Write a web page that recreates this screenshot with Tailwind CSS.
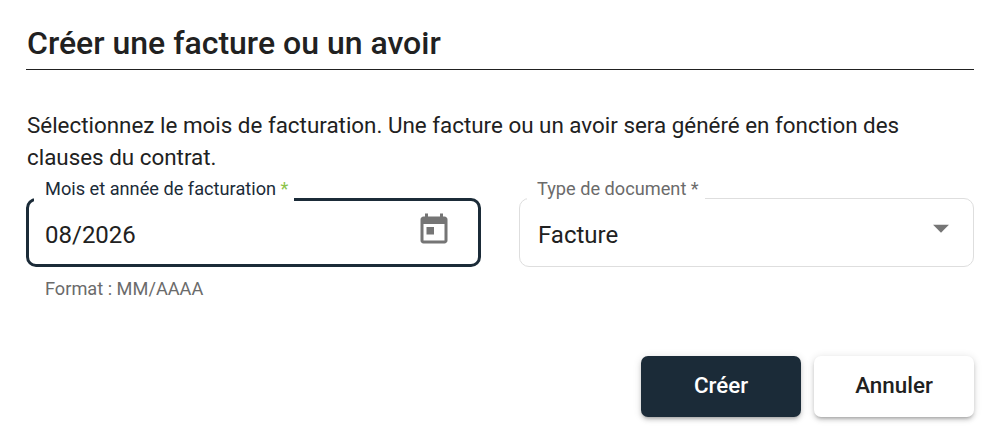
<!DOCTYPE html>
<html lang="fr">
<head>
  <meta charset="UTF-8" />
  <title>Créer une facture ou un avoir</title>
  <script src="https://cdn.jsdelivr.net/npm/@tailwindcss/browser@4"></script>
</head>
<body class="bg-white font-['Roboto',sans-serif] text-[#212121] overflow-hidden">
  <div class="w-[1002px] h-[442px] pl-[26px] pr-[28px] overflow-hidden">
    <!-- Title -->
    <h1 class="h-[70px] pt-[23px] pl-px border-b border-[#212121] text-[32px] leading-[40px] font-medium">Créer une facture ou un avoir</h1>

    <p class="mt-[39px] pl-px text-[22.4px] leading-[32px]">Sélectionnez le mois de facturation. Une facture ou un avoir sera généré en fonction des clauses du contrat.</p>

    <!-- Fields -->
    <div class="mt-[25px] flex gap-[38px]">
      <div class="w-[455px]">
        <div class="relative h-[69px] rounded-[10px] border-[3px] border-[#1b2b38] flex items-center justify-between pl-[16px] pr-[26px]">
          <span class="absolute left-[5px] -top-[24px] h-[26px] bg-white pl-[11px] pr-[6px] text-[18.2px] leading-[24px] text-[#1b2b38] whitespace-nowrap">Mois et année de facturation <span class="text-[#8bc34a]">*</span></span>
          <span class="text-[24px] pt-[5px]">08/2026</span>
          <svg class="w-[36px] h-[36px] -mt-[5px] fill-[#757575]" viewBox="0 0 24 24"><path d="M19 3h-1V1h-2v2H8V1H6v2H5c-1.11 0-1.99.9-1.99 2L3 19c0 1.1.89 2 2 2h14c1.1 0 2-.9 2-2V5c0-1.1-.9-2-2-2zm0 16H5V8h14v11zM7 10h5v5H7z"/></svg>
        </div>
        <p class="mt-[10px] pl-[19px] text-[18.2px] leading-[24px] text-[#6b6b6b]">Format : MM/AAAA</p>
      </div>

      <div class="w-[455px]">
        <div class="relative h-[69px] rounded-[10px] border border-[#dedede] flex items-center justify-between pl-[18px] pr-[13px]">
          <span class="absolute left-[7px] -top-[22px] h-[24px] bg-white pl-[10px] pr-[6px] text-[18.2px] leading-[24px] text-[#6b6b6b] whitespace-nowrap">Type de document *</span>
          <span class="text-[24px] pt-[5px]">Facture</span>
          <svg class="w-[38px] h-[38px] -mt-[9px] fill-[#757575]" viewBox="0 0 24 24"><path d="M7 10l5 5 5-5z"/></svg>
        </div>
      </div>
    </div>

    <!-- Actions -->
    <div class="mt-[55px] flex justify-end gap-[13px]">
      <button class="w-[160px] h-[61px] pb-[2px] rounded-[7px] bg-[#1b2b38] text-white text-[22.4px] font-medium shadow-[0_3px_3px_-2px_rgba(0,0,0,0.2),0_3px_4px_0_rgba(0,0,0,0.14),0_1px_8px_0_rgba(0,0,0,0.12)]">Créer</button>
      <button class="w-[160px] h-[61px] pb-[2px] rounded-[7px] bg-white text-[22.4px] font-medium shadow-[0_3px_3px_-2px_rgba(0,0,0,0.2),0_3px_4px_0_rgba(0,0,0,0.14),0_1px_8px_0_rgba(0,0,0,0.12)]">Annuler</button>
    </div>
  </div>
</body>
</html>
